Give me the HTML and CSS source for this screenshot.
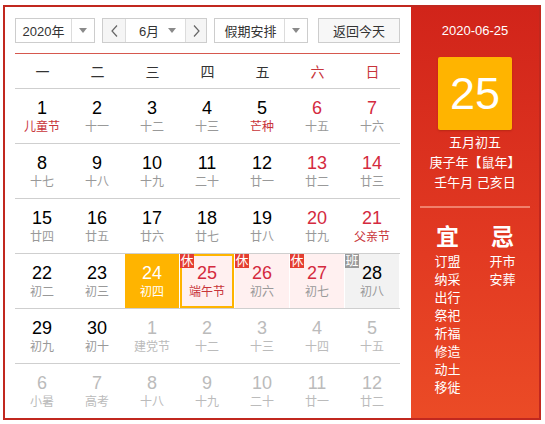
FILE: index.html
```html
<!DOCTYPE html>
<html lang="zh">
<head>
<meta charset="utf-8">
<link rel="stylesheet" href="styles.css">
</head>
<body>
<div class="cal">
  <div class="main">
    <div class="controls">
      <div class="sel year"><span class="val">2020年</span><span class="arr"><i class="tri"></i></span></div>
      <div class="month-group">
        <span class="nav prev"><svg width="7" height="12" viewBox="0 0 7 12"><polyline points="6,0.5 1,6 6,11.5" fill="none" stroke="#666" stroke-width="1.2"/></svg></span>
        <span class="mval"><span class="val">6月</span><i class="tri"></i></span>
        <span class="nav next"><svg width="7" height="12" viewBox="0 0 7 12"><polyline points="1,0.5 6,6 1,11.5" fill="none" stroke="#666" stroke-width="1.2"/></svg></span>
      </div>
      <div class="sel holiday"><span class="val">假期安排</span><span class="arr"><i class="tri"></i></span></div>
      <div class="btn">返回今天</div>
    </div>
    <div class="week">
      <span>一</span><span>二</span><span>三</span><span>四</span><span>五</span><span class="we">六</span><span class="we">日</span>
    </div>
    <div class="row">
      <div class="d"><b>1</b><em class="fest">儿童节</em></div>
      <div class="d"><b>2</b><em>十一</em></div>
      <div class="d"><b>3</b><em>十二</em></div>
      <div class="d"><b>4</b><em>十三</em></div>
      <div class="d"><b>5</b><em class="fest">芒种</em></div>
      <div class="d red"><b>6</b><em>十五</em></div>
      <div class="d red"><b>7</b><em>十六</em></div>
    </div>
    <div class="row">
      <div class="d"><b>8</b><em>十七</em></div>
      <div class="d"><b>9</b><em>十八</em></div>
      <div class="d"><b>10</b><em>十九</em></div>
      <div class="d"><b>11</b><em>二十</em></div>
      <div class="d"><b>12</b><em>廿一</em></div>
      <div class="d red"><b>13</b><em>廿二</em></div>
      <div class="d red"><b>14</b><em>廿三</em></div>
    </div>
    <div class="row">
      <div class="d"><b>15</b><em>廿四</em></div>
      <div class="d"><b>16</b><em>廿五</em></div>
      <div class="d"><b>17</b><em>廿六</em></div>
      <div class="d"><b>18</b><em>廿七</em></div>
      <div class="d"><b>19</b><em>廿八</em></div>
      <div class="d red"><b>20</b><em>廿九</em></div>
      <div class="d red"><b>21</b><em class="fest">父亲节</em></div>
    </div>
    <div class="row">
      <div class="d"><b>22</b><em>初二</em></div>
      <div class="d"><b>23</b><em>初三</em></div>
      <div class="d sel-day"><b>24</b><em>初四</em></div>
      <div class="d rest today red"><span class="tag">休</span><b>25</b><em class="fest">端午节</em></div>
      <div class="d rest red"><span class="tag">休</span><b>26</b><em>初六</em></div>
      <div class="d rest red"><span class="tag">休</span><b>27</b><em>初七</em></div>
      <div class="d work"><span class="tag">班</span><b>28</b><em>初八</em></div>
    </div>
    <div class="row">
      <div class="d"><b>29</b><em>初九</em></div>
      <div class="d"><b>30</b><em>初十</em></div>
      <div class="d other"><b>1</b><em>建党节</em></div>
      <div class="d other"><b>2</b><em>十二</em></div>
      <div class="d other"><b>3</b><em>十三</em></div>
      <div class="d other"><b>4</b><em>十四</em></div>
      <div class="d other"><b>5</b><em>十五</em></div>
    </div>
    <div class="row last">
      <div class="d other"><b>6</b><em>小暑</em></div>
      <div class="d other"><b>7</b><em>高考</em></div>
      <div class="d other"><b>8</b><em>十八</em></div>
      <div class="d other"><b>9</b><em>十九</em></div>
      <div class="d other"><b>10</b><em>二十</em></div>
      <div class="d other"><b>11</b><em>廿一</em></div>
      <div class="d other"><b>12</b><em>廿二</em></div>
    </div>
  </div>
  <div class="side">
    <div class="date">2020-06-25</div>
    <div class="big">25</div>
    <div class="lunar">
      <div>五月初五</div>
      <div>庚子年【鼠年】</div>
      <div>壬午月 己亥日</div>
    </div>
    <div class="sep"></div>
    <div class="yiji">
      <div class="col">
        <div class="h">宜</div>
        <div>订盟</div><div>纳采</div><div>出行</div><div>祭祀</div><div>祈福</div><div>修造</div><div>动土</div><div>移徙</div>
      </div>
      <div class="col">
        <div class="h">忌</div>
        <div>开市</div><div>安葬</div>
      </div>
    </div>
  </div>
</div>
</body>
</html>
```
FILE: styles.css
```css
* { box-sizing: border-box; }
body {
  margin: 0;
  background: #fff;
  font-family: "Liberation Sans", "Noto Sans CJK SC", sans-serif;
  color: #333;
}
.cal {
  margin: 5px 0 0 3px;
  width: 538px;
  height: 415px;
  border: 2px solid #c1281f;
  display: flex;
}
.main {
  width: 406px;
  padding: 11px 11px 0 10px;
}
.controls {
  display: flex;
  height: 25px;
  font-size: 13px;
  color: #333;
}
.sel, .month-group, .btn {
  border: 1px solid #cdcdcd;
  height: 25px;
  display: flex;
  align-items: stretch;
  background: #fff;
}
.val {
  display: flex;
  align-items: center;
  justify-content: center;
  flex: 1;
}
.arr {
  width: 23px;
  border-left: 1px solid #dcdcdc;
  display: flex;
  align-items: center;
  justify-content: center;
}
.tri {
  display: block;
  width: 0;
  height: 0;
  border-left: 4px solid transparent;
  border-right: 4px solid transparent;
  border-top: 5px solid #8a8a8a;
}
.year { width: 80px; }
.month-group { width: 105px; margin-left: 7px; }
.nav {
  display: flex;
  align-items: center;
  justify-content: center;
  background: #f5f5f5;
}
.prev { width: 23px; border-right: 1px solid #dcdcdc; }
.next { width: 21px; border-left: 1px solid #dcdcdc; }
.mval {
  flex: 1;
  display: flex;
  align-items: center;
  padding-right: 9px;
}
.mval .val { padding-left: 4px; }
.holiday { width: 94px; margin-left: 7px; }
.holiday .val { padding-left: 2px; }
.btn {
  width: 82px;
  margin-left: 10px;
  background: #f7f7f7;
  align-items: center;
  justify-content: center;
}
.week {
  margin-top: 10px;
  border-top: 1px solid #d6584e;
  border-bottom: 1px solid #cfcfcf;
  height: 36px;
  display: grid;
  grid-template-columns: repeat(7, 55px);
  align-items: center;
  font-size: 14px;
  color: #333;
}
.week span { text-align: center; }
.week .we { color: #c8343a; }
.row {
  display: grid;
  grid-template-columns: repeat(7, 55px);
  height: 55px;
  border-bottom: 1px solid #cfcfcf;
}
.row.last { border-bottom: none; }
.d {
  position: relative;
  display: flex;
  flex-direction: column;
  align-items: center;
  padding-top: 9px;
  border-right: 1px solid transparent;
  background-clip: padding-box;
}
.d b {
  font-weight: normal;
  font-size: 18px;
  line-height: 20px;
  color: #000;
}
.d em {
  font-style: normal;
  font-size: 12px;
  line-height: 18px;
  color: #999;
}
.d.red b { color: #d42a3e; }
.d em.fest { color: #c8343a; }
.d.other b, .d.other em { color: #bbb; }
.sel-day { background-color: #ffb400; }
.sel-day b, .sel-day em { color: #fff; }
.rest { background-color: #fff0f0; }
.work { background-color: #f2f2f2; }
.today {
  border: 2px solid #ffb400;
  padding-top: 7px;
  margin-right: 1px;
}
.tag {
  position: absolute;
  top: 0;
  left: 0;
  width: 14px;
  height: 14px;
  font-size: 13px;
  line-height: 14px;
  text-align: center;
  color: #fff;
  background: #e43d30;
}
.today .tag { top: -2px; left: -2px; }
.work .tag { background: #9a9a9a; }
.side {
  flex: 1;
  background: linear-gradient(180deg, #d1241a 0%, #e23a22 60%, #eb4b26 100%);
  color: #fff;
  display: flex;
  flex-direction: column;
  align-items: center;
}
.date {
  margin-top: 15px;
  font-size: 13px;
  line-height: 18px;
}
.big {
  margin-top: 17px;
  width: 74px;
  height: 73px;
  background: #ffb400;
  border-radius: 2px;
  display: flex;
  align-items: center;
  justify-content: center;
  font-size: 45px;
  font-family: "Liberation Sans", sans-serif;
  box-shadow: 0 1px 2px rgba(120, 30, 0, 0.35);
}
.lunar {
  margin-top: 3px;
  font-size: 13px;
  line-height: 20px;
  text-align: center;
}
.sep {
  margin-top: 13px;
  width: 110px;
  height: 2px;
  background: rgba(255, 190, 170, 0.55);
}
.yiji {
  display: flex;
  width: 110px;
  margin-top: 16px;
}
.col {
  width: 55px;
  text-align: center;
  font-size: 13px;
  line-height: 18px;
}
.col .h {
  font-size: 23px;
  font-weight: bold;
  line-height: 26px;
  margin-bottom: 3px;
}
```
